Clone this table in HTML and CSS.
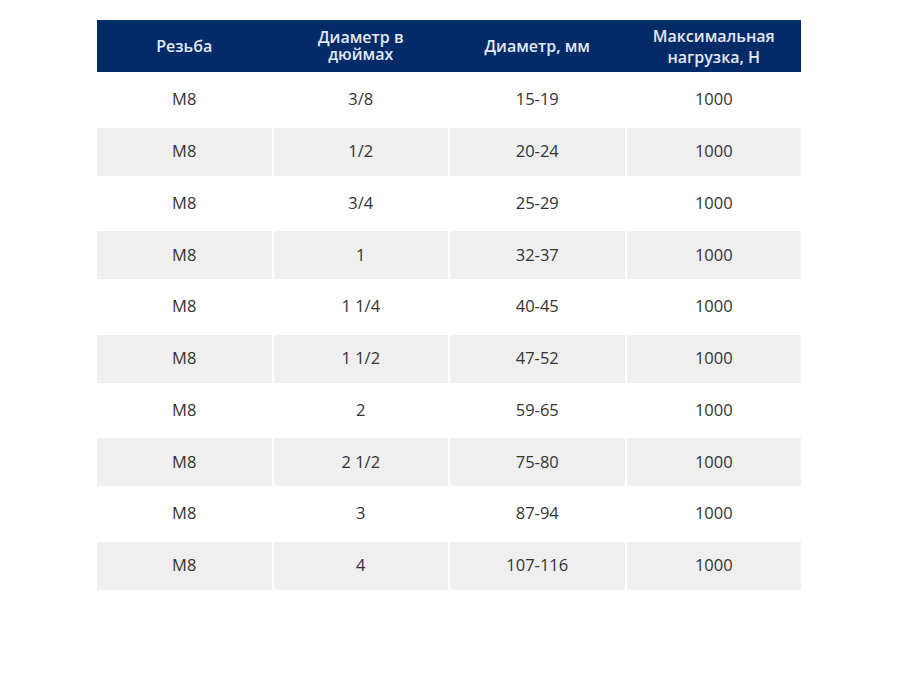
FILE: index.html
```html
<!DOCTYPE html>
<html lang="ru">
<head>
<meta charset="utf-8">
<title>Таблица</title>
<link rel="stylesheet" href="styles.css">
</head>
<body>
<div class="table">
  <div class="head">
    <div class="hc">Резьба</div>
    <div class="hc"><span class="wrap w1">Диаметр в дюймах</span></div>
    <div class="hc">Диаметр, мм</div>
    <div class="hc two"><span class="wrap w2">Максимальная нагрузка, Н</span></div>
  </div>
  <div class="row"><div class="c">M8</div><div class="c">3/8</div><div class="c">15-19</div><div class="c">1000</div></div>
  <div class="row alt"><div class="c">M8</div><div class="c">1/2</div><div class="c">20-24</div><div class="c">1000</div></div>
  <div class="row"><div class="c">M8</div><div class="c">3/4</div><div class="c">25-29</div><div class="c">1000</div></div>
  <div class="row alt"><div class="c">M8</div><div class="c">1</div><div class="c">32-37</div><div class="c">1000</div></div>
  <div class="row"><div class="c">M8</div><div class="c">1 1/4</div><div class="c">40-45</div><div class="c">1000</div></div>
  <div class="row alt"><div class="c">M8</div><div class="c">1 1/2</div><div class="c">47-52</div><div class="c">1000</div></div>
  <div class="row"><div class="c">M8</div><div class="c">2</div><div class="c">59-65</div><div class="c">1000</div></div>
  <div class="row alt"><div class="c">M8</div><div class="c">2 1/2</div><div class="c">75-80</div><div class="c">1000</div></div>
  <div class="row"><div class="c">M8</div><div class="c">3</div><div class="c">87-94</div><div class="c">1000</div></div>
  <div class="row alt"><div class="c">M8</div><div class="c">4</div><div class="c">107-116</div><div class="c">1000</div></div>
</div>
</body>
</html>
```
FILE: styles.css
```css
html, body {
  margin: 0;
  padding: 0;
  background: #ffffff;
}
body {
  font-family: "Open Sans", "Liberation Sans", sans-serif;
  padding: 20px 0 0 97px;
}
.table {
  width: 704px;
  display: flex;
  flex-direction: column;
  gap: 3.75px;
}
.head {
  display: grid;
  grid-template-columns: repeat(4, 1fr);
  column-gap: 2px;
  height: 52px;
  background: #022b68;
}
.hc {
  display: flex;
  align-items: center;
  justify-content: center;
  text-align: center;
  color: #e4e8f0;
  font-weight: 600;
  font-size: 16px;
  line-height: 18px;
}
.wrap {
  display: block;
}
.w1 {
  max-width: 100px;
  line-height: 17px;
}
.w2 {
  max-width: 135px;
  line-height: 21px;
}
.hc.two {
  padding-top: 2px;
}
.row {
  display: grid;
  grid-template-columns: repeat(4, 1fr);
  column-gap: 2px;
  height: 48px;
}
.c {
  display: flex;
  align-items: center;
  justify-content: center;
  color: #333333;
  font-size: 16.5px;
  padding-bottom: 2px;
}
.row.alt .c {
  background: #efefef;
}
```
